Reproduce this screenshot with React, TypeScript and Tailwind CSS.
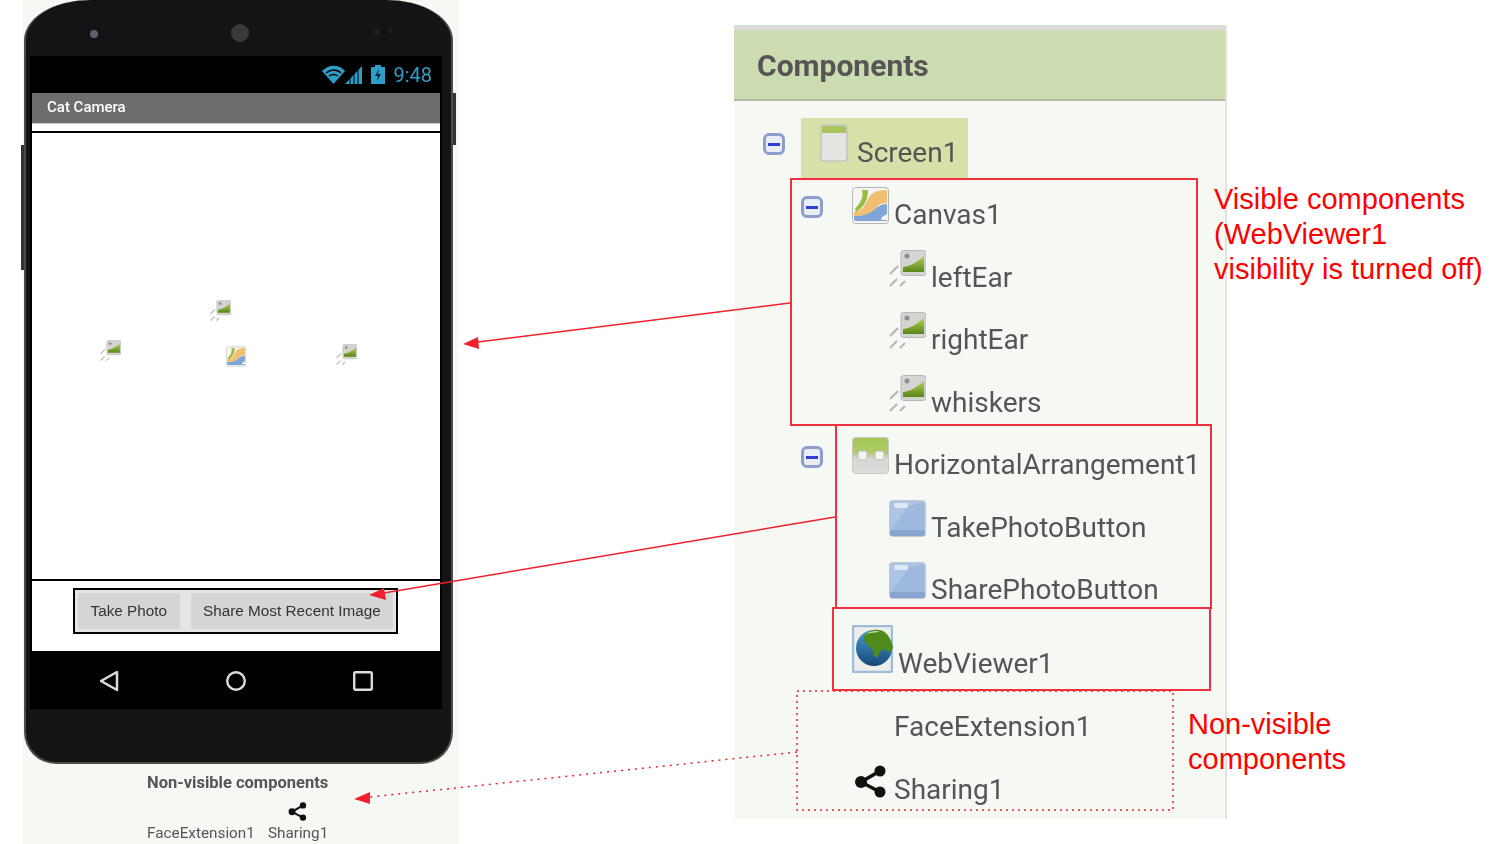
import React from 'react';

const ScreenIcon = () => (
  <svg viewBox="0 0 28 38" className="w-[28px] h-[38px]">
    <rect x="1" y="1" width="26" height="36" rx="3" fill="#e4e4e2" stroke="#c2c4be" strokeWidth="1.5" />
    <path d="M2 4a2 2 0 0 1 2-2h20a2 2 0 0 1 2 2v5H2z" fill="#a8c65a" />
  </svg>
);

const CanvasIcon = ({ className = 'w-[37px] h-[37px]' }: { className?: string }) => (
  <svg viewBox="0 0 37 37" className={className}>
    <rect x="0.5" y="0.5" width="36" height="36" rx="3" fill="#f4f4f2" stroke="#b5b5b5" />
    <path d="M2 25c8-1 11-6 14-13 3-6 9-9 19-9v13c-8 0-9 3-13 7-5 5-12 6-20 6z" fill="#f0bf72" />
    <path d="M2 29c9 0 15-2 20-6 3-3 7-6 13-6v17H4a2 2 0 0 1-2-2z" fill="#7ea6d6" />
    <path d="M10 3c2 8-2 13-7 19l1 3c7-4 12-11 12-22z" fill="#96bd3c" />
    <path d="M30 30l5-3v6h-6z" fill="#f4f4f2" />
  </svg>
);

// image sprite with the little motion streaks at its lower left
const SpriteIcon = ({ className = 'w-[37px] h-[38px]' }: { className?: string }) => (
  <svg viewBox="0 0 37 38" className={className}>
    <defs>
      <linearGradient id="hill" x1="0" y1="0" x2="0" y2="1">
        <stop offset="0" stopColor="#b4d24e" />
        <stop offset="1" stopColor="#56861a" />
      </linearGradient>
    </defs>
    <rect x="12" y="0.5" width="25" height="25" rx="2.5" fill="#d4d4d2" stroke="#b8b8b8" />
    <path d="M14 17c8-1 14-5 21-11v16H14z" fill="url(#hill)" />
    <circle cx="18" cy="6" r="2.5" fill="#8f8f8f" />
    <path d="M1 24l8-8M1 36l7-7M11 36l5-5" stroke="#b5b5b5" strokeWidth="2" fill="none" />
  </svg>
);

const ArrangementIcon = () => (
  <svg viewBox="0 0 37 37" className="w-[37px] h-[37px]">
    <defs>
      <linearGradient id="arr" x1="0" y1="0" x2="0" y2="1">
        <stop offset="0" stopColor="#a4c850" />
        <stop offset="0.4" stopColor="#aecb66" />
        <stop offset="0.6" stopColor="#d8d8d4" />
        <stop offset="1" stopColor="#dcdcda" />
      </linearGradient>
    </defs>
    <rect x="0.5" y="0.5" width="36" height="36" rx="3" fill="url(#arr)" stroke="#c8c8c6" />
    <rect x="6" y="14" width="9" height="9" rx="2" fill="#f3f3f1" stroke="#bcbcba" />
    <rect x="23" y="14" width="9" height="9" rx="2" fill="#f3f3f1" stroke="#bcbcba" />
  </svg>
);

const ButtonIcon = () => (
  <svg viewBox="0 0 37 37" className="w-[37px] h-[37px]">
    <rect x="0.5" y="0.5" width="36" height="36" rx="3" fill="#acc5e4" stroke="#c2c8d0" />
    <path d="M2 30L20 6 35 2v29z" fill="#9dbade" />
    <rect x="1" y="30" width="35" height="6" rx="2" fill="#86a6cf" />
    <rect x="5" y="3" width="14" height="5" rx="2" fill="#dde8f5" />
  </svg>
);

const WebIcon = () => (
  <svg viewBox="0 0 41 48" className="w-[41px] h-[48px]">
    <defs>
      <linearGradient id="globe" x1="0" y1="0" x2="0" y2="1">
        <stop offset="0" stopColor="#4a9ad0" />
        <stop offset="1" stopColor="#164a78" />
      </linearGradient>
    </defs>
    <rect x="1" y="1" width="39" height="46" rx="1.5" fill="#ecefe9" stroke="#9dbbdc" strokeWidth="2.5" />
    <circle cx="22" cy="23" r="18" fill="url(#globe)" />
    <path d="M11 12c5-7 13-9 20-6 6 4 9 10 10 17-2 4-5 5-7 2-3-3-6 1-8 7-3 1-5-2-5-7-3-3-9-7-10-13z" fill="#4f8a1c" />
    <path d="M14 9c4-3 10-4 14-2-5 0-10 1-14 2z" fill="#c2dea6" />
  </svg>
);

const ShareIcon = ({ className }: { className: string }) => (
  <svg viewBox="0 0 33 33" className={className}>
    <path d="M26 6L7 17l19 10" stroke="#111" strokeWidth="3.5" fill="none" />
    <circle cx="26" cy="6" r="5.5" fill="#111" />
    <circle cx="7" cy="17" r="6" fill="#111" />
    <circle cx="26" cy="27" r="5.5" fill="#111" />
  </svg>
);

const Minus = () => (
  <span className="flex items-center justify-center w-[22px] h-[22px] rounded-[6px] border-[3px] border-[#8c9fcc] bg-[#e9edf5]">
    <span className="w-[12px] h-[3px] bg-[#2f3fd0]" />
  </span>
);

const Label = ({ children, className = 'mt-[18px]' }: { children: React.ReactNode; className?: string }) => (
  <span className={`${className} h-[32px] leading-[32px] text-[28px] text-[#555] font-['Roboto',sans-serif] whitespace-nowrap`}>
    {children}
  </span>
);

const ParentRow = ({ icon, name }: { icon: React.ReactNode; name: string }) => (
  <div className="flex items-start h-[62.5px] pl-[67px]">
    <span className="mt-[15px] w-[22px]"><Minus /></span>
    <span className="mt-[6px] ml-[29px] w-[37px]">{icon}</span>
    <span className="ml-[5px] flex"><Label>{name}</Label></span>
  </div>
);

const LeafRow = ({ icon, name }: { icon: React.ReactNode; name: string }) => (
  <div className="flex items-start h-[62.5px] pl-[155px]">
    <span className="mt-[6px] w-[37px]">{icon}</span>
    <span className="ml-[5px] flex"><Label>{name}</Label></span>
  </div>
);

const Sprite = ({ name }: { name: string }) => <LeafRow icon={<SpriteIcon />} name={name} />;

const ComponentsPanel = () => (
  <div className="relative mt-[25px] ml-[275px] w-[493px] h-[794px] bg-[#f6f8f3] border-r-2 border-[#e2e2e2] blur-[0.5px]">
    <div className="h-[5px] bg-[#dcdcdc]" />
    <div className="h-[71px] flex items-center pl-[23px] pt-[1px] bg-[#cddbb0] border-b-2 border-[#b3b9a6]">
      <h2 className="text-[30px] font-bold text-[#555] font-['Roboto',sans-serif]">Components</h2>
    </div>
    <div className="flex items-start mt-[17px] h-[63px] pl-[29px]">
      <span className="mt-[15px]"><Minus /></span>
      <div className="ml-[16px] w-[167px] h-[60px] bg-[#d6e0a8] flex items-start pl-[19px]">
        <span className="mt-[6px]"><ScreenIcon /></span>
        <span className="ml-[9px] flex"><Label className="mt-[19px]">Screen1</Label></span>
      </div>
    </div>
    <ParentRow icon={<CanvasIcon />} name="Canvas1" />
    <Sprite name="leftEar" />
    <Sprite name="rightEar" />
    <Sprite name="whiskers" />
    <ParentRow icon={<ArrangementIcon />} name="HorizontalArrangement1" />
    <LeafRow icon={<ButtonIcon />} name="TakePhotoButton" />
    <LeafRow icon={<ButtonIcon />} name="SharePhotoButton" />
    <div className="flex items-start h-[73px] pl-[118px]">
      <span className="mt-[6px] w-[41px]"><WebIcon /></span>
      <span className="ml-[5px] flex"><Label className="mt-[29px]">WebViewer1</Label></span>
    </div>
    <div className="flex items-start h-[62.5px] pl-[160px]">
      <Label className="mt-[19px]">FaceExtension1</Label>
    </div>
    <div className="flex items-start pl-[120px]">
      <span className="mt-[11px] w-[33px]"><ShareIcon className="w-[33px] h-[33px]" /></span>
      <span className="ml-[7px] flex"><Label className="mt-[20px]">Sharing1</Label></span>
    </div>
  </div>
);

const StatusBar = () => (
  <div className="h-[37px] flex items-center justify-end pr-[10px] gap-[8px]">
    <svg viewBox="0 0 42 20" className="w-[42px] h-[20px]">
      <path d="M1 6c7-7 17-7 23 0L12.500 19z" fill="#2f9dc6" />
      <path d="M5 8c5-4 11-4 15 0M8 11c3-2 6-2 9 0" stroke="#000" strokeWidth="1.400" fill="none" />
      <path d="M24 19L41 1v18z" fill="#2f9dc6" />
      <path d="M29 13v7M33 9v11M37 5v15" stroke="#000" strokeWidth="1" />
    </svg>
    <svg viewBox="0 0 14 19" className="w-[14px] h-[19px]">
      <path d="M4 2V0h6v2h4v17H0V2z" fill="#2f9dc6" />
      <path d="M8 4L4 11h3l-1 5 4-7H7z" fill="#08293a" />
    </svg>
    <span className="text-[20px] leading-none text-[#2f9dc6] font-['Roboto',sans-serif]">9:48</span>
  </div>
);

const NavBar = () => (
  <div className="h-[58px] flex items-center pl-[69px] pt-[2px] gap-[107px]">
    <svg viewBox="0 0 20 22" className="w-[20px] h-[22px]">
      <path d="M18 2v18L2 11z" stroke="#dcdcdc" strokeWidth="2.500" fill="none" strokeLinejoin="round" />
    </svg>
    <svg viewBox="0 0 20 20" className="w-[20px] h-[20px]">
      <circle cx="10" cy="10" r="8.800" stroke="#dcdcdc" strokeWidth="2.400" fill="none" />
    </svg>
    <svg viewBox="0 0 20 20" className="w-[20px] h-[20px]">
      <rect x="1.200" y="1.200" width="17.600" height="17.600" rx="1.500" stroke="#dcdcdc" strokeWidth="2.400" fill="none" />
    </svg>
  </div>
);

const Phone = () => (
  <div className="relative ml-[2px] w-[429px] h-[764px] px-[4px] pt-[56px] bg-[#141414] border-x-2 border-b-2 border-[#4c4c4c] rounded-tl-[66px_40px] rounded-tr-[66px_40px] rounded-b-[32px]">
    <span className="absolute left-[64px] top-[30px] w-[8px] h-[8px] rounded-full bg-[#5c6070]" />
    <span className="absolute left-[205px] top-[24px] w-[18px] h-[18px] rounded-full bg-[#3a3a3a]" />
    <span className="absolute left-[348px] top-[29px] w-[6px] h-[6px] rounded-full bg-[#222]" />
    <span className="absolute left-[362px] top-[29px] w-[4px] h-[4px] rounded-full bg-[#222]" />
    <span className="absolute -right-[5px] top-[93px] w-[3px] h-[52px] bg-[#333]" />
    <span className="absolute -left-[5px] top-[145px] w-[3px] h-[125px] bg-[#333]" />
    <div className="bg-black w-[412px] h-[653px]">
      <StatusBar />
      <div className="mx-[2px] bg-white">
        <div className="h-[31px] flex items-center pl-[15px] pb-[2px] bg-[#6d6d6d] border-b border-[#c8c8c8]">
          <span className="text-[15px] font-medium text-white font-['Roboto',sans-serif]">Cat Camera</span>
        </div>
        <div className="h-[7px]" />
        <div className="relative h-[450px] border-y-2 border-black">
          <SpriteIcon className="absolute left-[178px] top-[167px] w-[21px] h-[22px]" />
          <SpriteIcon className="absolute left-[68px] top-[207px] w-[21px] h-[22px]" />
          <SpriteIcon className="absolute left-[304px] top-[211px] w-[21px] h-[22px]" />
          <CanvasIcon className="absolute left-[194px] top-[213px] w-[20px] h-[21px]" />
        </div>
        <div className="h-[70px] pt-[7px] pl-[41px]">
          <div className="flex w-[325px] h-[46px] p-[3px] gap-[11px] bg-[#e5e5e5] border-[2.5px] border-black font-['Liberation_Sans',sans-serif] text-[15.300px] text-[#333]">
            <span className="w-[102px] flex items-center justify-center bg-[#d4d6d5] rounded-[2px]">Take Photo</span>
            <span className="w-[203px] flex items-center justify-center bg-[#d4d6d5] rounded-[2px] whitespace-nowrap">Share Most Recent Image</span>
          </div>
        </div>
      </div>
      <NavBar />
    </div>
  </div>
);

const NonVisible = () => (
  <div className="font-['Roboto',sans-serif] text-[#555]">
    <p className="mt-[9px] pl-[125px] h-[20px] leading-[20px] text-[16.500px] font-bold">Non-visible components</p>
    <div className="mt-[9px] pl-[266px]"><ShareIcon className="w-[19px] h-[19px]" /></div>
    <div className="flex pl-[125px] gap-[13px] mt-[3px] text-[15.300px] leading-[18px]">
      <span>FaceExtension1</span>
      <span>Sharing1</span>
    </div>
  </div>
);

// red boxes, arrows and captions that sit over the slide
const Annotations = () => (
  <>
    <div className="absolute left-[790px] top-[178px] w-[408px] h-[248px] border-2 border-[#f0303c]" />
    <div className="absolute left-[835px] top-[424px] w-[377px] h-[185px] border-2 border-[#f0303c]" />
    <div className="absolute left-[832px] top-[607px] w-[379px] h-[84px] border-2 border-[#f0303c]" />
    <svg viewBox="0 0 1494 844" className="absolute left-0 top-0 w-[1494px] h-[844px] pointer-events-none">
      <rect x="797" y="691" width="376" height="119" fill="none" stroke="#f0202c" strokeWidth="1.500" strokeDasharray="2 4" />
      <path d="M790 303L478 342" stroke="#f0202c" strokeWidth="1.500" />
      <path d="M463 344l15-7 1 12z" fill="#f0202c" />
      <path d="M835 517L384 593" stroke="#f0202c" strokeWidth="1.500" />
      <path d="M369 595l15-7 2 12z" fill="#f0202c" />
      <path d="M797 752L370 797" stroke="#f0202c" strokeWidth="1.500" strokeDasharray="2 5" />
      <path d="M354 799l16-7 0 12z" fill="#f0202c" />
    </svg>
    <p className="absolute left-[1214px] top-[182px] text-[29px] leading-[35px] text-[#ff0000] font-['Liberation_Sans',sans-serif] whitespace-nowrap">
      Visible components<br />(WebViewer1<br />visibility is turned off)
    </p>
    <p className="absolute left-[1188px] top-[707px] text-[29px] leading-[35px] text-[#ff0000] font-['Liberation_Sans',sans-serif] whitespace-nowrap">
      Non-visible<br />components
    </p>
  </>
);

export default function App() {
  return (
    <div className="relative flex items-start w-[1494px] h-[844px] overflow-hidden bg-white">
      <div className="ml-[22px] w-[437px] h-[844px] bg-[#f6f8f3] blur-[0.5px]">
        <Phone />
        <NonVisible />
      </div>
      <ComponentsPanel />
      <Annotations />
    </div>
  );
}
